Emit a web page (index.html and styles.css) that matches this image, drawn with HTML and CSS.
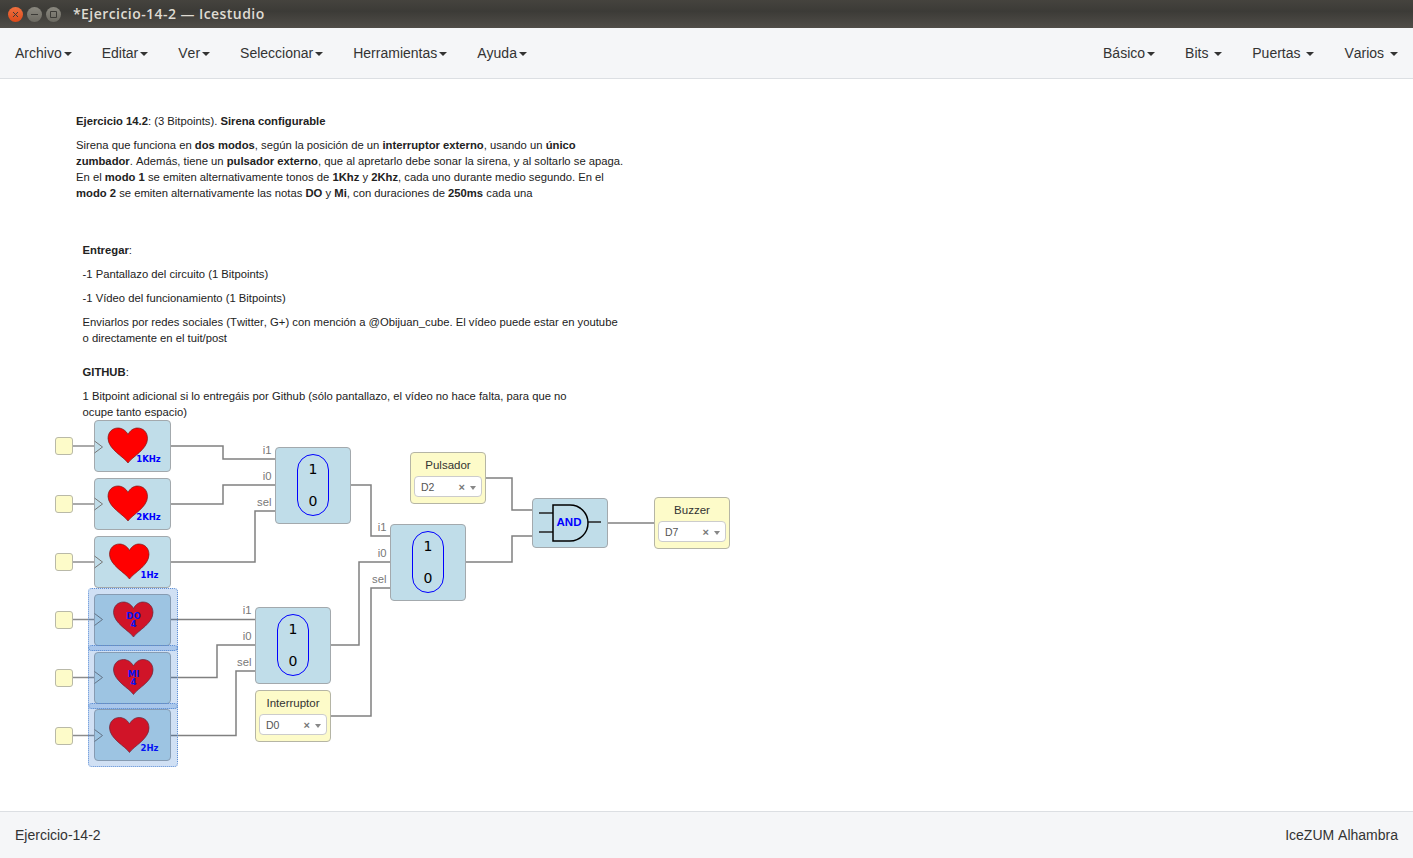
FILE: index.html
```html
<!DOCTYPE html>
<html>
  <head>
    <meta charset="utf-8" />
    <title>Icestudio</title>
    <link rel="stylesheet" href="styles.css">
  </head>

  <body>
    <!-- shared drawings for the blocks -->
    <svg class="defs">
      <defs>
        <path id="heart" d="M20.5 35.5C16 29 1 22 .5 11 .5 4.5 5 .5 10.5 .5 14.5 .5 18.5 3 20.5 7 22.5 3 26 .5 30 .5 35.5 .5 40 4.5 40 11 40 22 25 29 20.5 35.5Z" />
        <path id="clock" d="M0 0L8 6 0 12" />
      </defs>
    </svg>

    <header class="titlebar">
      <div class="win-buttons">
        <span class="win-btn win-close"><svg width="7" height="7" viewBox="0 0 7 7"><path d="M1 1L6 6M6 1L1 6" /></svg></span>
        <span class="win-btn"><svg width="7" height="7" viewBox="0 0 7 7"><path d="M0 3.5H7" /></svg></span>
        <span class="win-btn"><svg width="7" height="7" viewBox="0 0 7 7"><path d="M.5 .5H6.5V6.5H.5Z" /></svg></span>
      </div>
      <span class="win-title">*Ejercicio-14-2 — Icestudio</span>
    </header>

    <nav class="menubar">
      <ul class="menu">
        <li>Archivo<i class="caret"></i></li>
        <li>Editar<i class="caret"></i></li>
        <li>Ver<i class="caret"></i></li>
        <li>Seleccionar<i class="caret"></i></li>
        <li>Herramientas<i class="caret"></i></li>
        <li>Ayuda<i class="caret"></i></li>
      </ul>
      <ul class="menu">
        <li>Básico<i class="caret"></i></li>
        <li>Bits <i class="caret"></i></li>
        <li>Puertas <i class="caret"></i></li>
        <li>Varios <i class="caret"></i></li>
      </ul>
    </nav>

    <main class="canvas">
      <div class="info info-a">
        <p><b>Ejercicio 14.2</b>: (3 Bitpoints). <b>Sirena configurable</b></p>
        <p>Sirena que funciona en <b>dos modos</b>, según la posición de un <b>interruptor externo</b>, usando un <b>único<br>zumbador</b>. Además, tiene un <b>pulsador externo</b>, que al apretarlo debe sonar la sirena, y al soltarlo se apaga.<br>En el <b>modo 1</b> se emiten alternativamente tonos de <b>1Khz</b> y <b>2Khz</b>, cada uno durante medio segundo. En el<br><b>modo 2</b> se emiten alternativamente las notas <b>DO</b> y <b>Mi</b>, con duraciones de <b>250ms</b> cada una</p>
      </div>

      <div class="info info-b">
        <p><b>Entregar</b>:</p>
        <p>-1 Pantallazo del circuito (1 Bitpoints)</p>
        <p>-1 Vídeo del funcionamiento (1 Bitpoints)</p>
        <p>Enviarlos por redes sociales (Twitter, G+) con mención a @Obijuan_cube. El vídeo puede estar en youtube<br>o directamente en el tuit/post</p>
        <p class="gap"><b>GITHUB</b>:</p>
        <p>1 Bitpoint adicional si lo entregáis por Github (sólo pantallazo, el vídeo no hace falta, para que no<br>ocupe tanto espacio)</p>
      </div>

      <!-- wires use page coordinates, see the viewBox -->
      <svg class="wires" viewBox="0 79 1413 732">
        <g class="wire-light">
          <path d="M72 446H95" />
          <path d="M72 504H95" />
          <path d="M72 562H95" />
        </g>
        <g class="wire-mid">
          <path d="M72 619.500H95" />
          <path d="M72 677.500H95" />
          <path d="M72 735.500H95" />
        </g>
        <path d="M171 446H223V459H275" />
        <path d="M171 504H223V485H275" />
        <path d="M171 562H255V511H275" />
        <path d="M351 485H371V536H390" />
        <path d="M171 619.500H255" />
        <path d="M171 677.500H217V645H255" />
        <path d="M171 735.500H236V671H255" />
        <path d="M331 645H359V562H390" />
        <path d="M331 716H371V588H390" />
        <path d="M486 478H512V510H532" />
        <path d="M466 562H512V536H532" />
        <path d="M608 523H654" />
      </svg>

      <div class="node pin pin-1"></div>
      <div class="node pin pin-2"></div>
      <div class="node pin pin-3"></div>
      <div class="node pin pin-4"></div>
      <div class="node pin pin-5"></div>
      <div class="node pin pin-6"></div>

      <div class="node block note note-1">
        <svg class="block-art" viewBox="0 0 77 52">
          <use class="clk" href="#clock" x="0.500" y="21" />
          <use class="hrt" href="#heart" x="13.500" y="7.500" />
          <text class="tag" x="54.500" y="42" text-anchor="middle">1KHz</text>
        </svg>
      </div>
      <div class="node block note note-2">
        <svg class="block-art" viewBox="0 0 77 52">
          <use class="clk" href="#clock" x="0.500" y="20" />
          <use class="hrt" href="#heart" x="13.500" y="7.500" />
          <text class="tag" x="54.500" y="42" text-anchor="middle">2KHz</text>
        </svg>
      </div>
      <div class="node block note note-3">
        <svg class="block-art" viewBox="0 0 77 52">
          <use class="clk" href="#clock" x="0.500" y="20" />
          <use class="hrt" href="#heart" x="15" y="7.500" />
          <text class="tag" x="55.500" y="42" text-anchor="middle">1Hz</text>
        </svg>
      </div>
      <div class="node block note note-4">
        <svg class="block-art" viewBox="0 0 77 52">
          <use class="clk" href="#clock" x="0.500" y="19.500" />
          <use class="hrt" href="#heart" x="19" y="7.500" />
          <text class="tag" x="39.500" y="25" text-anchor="middle">DO</text>
          <text class="tag" x="39.500" y="33" text-anchor="middle">4</text>
        </svg>
      </div>
      <div class="node block note note-5">
        <svg class="block-art" viewBox="0 0 77 52">
          <use class="clk" href="#clock" x="0.500" y="19.500" />
          <use class="hrt" href="#heart" x="19" y="7" />
          <text class="tag" x="39.500" y="25" text-anchor="middle">MI</text>
          <text class="tag" x="39.500" y="33" text-anchor="middle">4</text>
        </svg>
      </div>
      <div class="node block note note-6">
        <svg class="block-art" viewBox="0 0 77 52">
          <use class="clk" href="#clock" x="0.500" y="20.500" />
          <use class="hrt" href="#heart" x="15" y="8" />
          <text class="tag" x="55.500" y="42" text-anchor="middle">2Hz</text>
        </svg>
      </div>

      <div class="node block mux mux-1">
        <span class="port port-i1">i1</span><span class="port port-i0">i0</span><span class="port port-sel">sel</span>
        <div class="pill"><span>1</span><span>0</span></div>
      </div>
      <div class="node block mux mux-2">
        <span class="port port-i1">i1</span><span class="port port-i0">i0</span><span class="port port-sel">sel</span>
        <div class="pill"><span>1</span><span>0</span></div>
      </div>
      <div class="node block mux mux-3">
        <span class="port port-i1">i1</span><span class="port port-i0">i0</span><span class="port port-sel">sel</span>
        <div class="pill"><span>1</span><span>0</span></div>
      </div>

      <div class="node block gate">
        <svg class="block-art" viewBox="0 0 77 50">
          <path class="gate-line" d="M7 15H21M7 34H21M56 24H69" />
          <path class="gate-body" d="M21 7H38C48 7 56 15 56 25S48 43 38 43H21Z" />
          <text class="gate-text" x="37" y="28" text-anchor="middle">AND</text>
        </svg>
      </div>

      <div class="node io io-pulsador">
        <div class="io-name">Pulsador</div>
        <div class="io-select"><span>D2</span><span class="io-x">×</span><i class="io-arrow"></i></div>
      </div>
      <div class="node io io-buzzer">
        <div class="io-name">Buzzer</div>
        <div class="io-select"><span>D7</span><span class="io-x">×</span><i class="io-arrow"></i></div>
      </div>
      <div class="node io io-interruptor">
        <div class="io-name">Interruptor</div>
        <div class="io-select"><span>D0</span><span class="io-x">×</span><i class="io-arrow"></i></div>
      </div>

      <!-- selection boxes sit over the blocks and tint them -->
      <div class="node sel sel-1"></div>
      <div class="node sel sel-2"></div>
      <div class="node sel sel-3"></div>
    </main>

    <footer class="statusbar">
      <span>Ejercicio-14-2</span>
      <span>IceZUM Alhambra</span>
    </footer>
  </body>
</html>
```

FILE: styles.css
```css
html,
body {
  height: 100%;
}

body {
  margin: 0;
  display: flex;
  flex-direction: column;
  font-family: "Liberation Sans", Arial, sans-serif;
  font-kerning: none;
  color: #333;
  background: #fff;
  overflow: hidden;
}

.defs {
  position: absolute;
  width: 0;
  height: 0;
}

/* Window title bar */
.titlebar {
  flex: 0 0 28px;
  display: flex;
  align-items: center;
  background: linear-gradient(#45433e, #3c3b37 40%, #504d48);
}

.win-buttons {
  display: flex;
  gap: 4px;
  padding-left: 8px;
  width: 65px;
}

.win-btn {
  width: 15px;
  height: 15px;
  border-radius: 50%;
  display: flex;
  align-items: center;
  justify-content: center;
  background: linear-gradient(#8a887f, #6c6a62);
  border: 0;
}

.win-btn svg {
  fill: none;
  stroke: #3c3b37;
  stroke-width: 1;
}

.win-close {
  background: linear-gradient(#f0703f, #dc4a1a);
}

.win-title {
  padding-bottom: 2px;
  font-family: "Open Sans", sans-serif;
  font-size: 14px;
  font-weight: 600;
  letter-spacing: 0.44px;
  color: #dfdbd2;
}

/* Menus */
.menubar {
  flex: 0 0 50px;
  display: flex;
  justify-content: space-between;
  background: #f5f6f8;
  border-bottom: 1px solid #dcdfe3;
}

.menu {
  display: flex;
  margin: 0;
  padding: 0;
  list-style: none;
  font-size: 14px;
}

.menu li {
  padding: 0 15px;
  line-height: 50px;
  white-space: nowrap;
}

.caret {
  display: inline-block;
  width: 0;
  height: 0;
  margin-left: 2px;
  vertical-align: middle;
  border-top: 4px solid #333;
  border-left: 4px solid transparent;
  border-right: 4px solid transparent;
}

/* Design canvas, everything in it is placed freely */
.canvas {
  flex: 1;
  position: relative;
}

.info {
  position: absolute;
  font-size: 11.25px;
  line-height: 16px;
  color: #222;
}

.info p {
  margin: 0 0 8px;
  white-space: nowrap;
}

.info .gap {
  margin-top: 18px;
}

.info-a {
  left: 76px;
  top: 34px;
}

.info-b {
  left: 82.5px;
  top: 163px;
}

.wires {
  position: absolute;
  left: 0;
  top: 0;
  width: 1413px;
  height: 732px;
  fill: none;
  stroke: #808080;
  stroke-width: 1.5;
}

.wire-light {
  stroke: #aaa;
  stroke-width: 2;
}

.wire-mid {
  stroke: #8c8c8c;
}

.node {
  position: absolute;
  box-sizing: border-box;
}

.pin {
  left: 55px;
  width: 18px;
  height: 18px;
  background: #fdfbc9;
  border: 1px solid #b9b9a8;
  border-radius: 3px;
}

.pin-1 { top: 358px; }
.pin-2 { top: 416px; }
.pin-3 { top: 474px; }
.pin-4 { top: 532px; }
.pin-5 { top: 590px; }
.pin-6 { top: 648px; }

.block {
  background: #c0dde9;
  border: 1px solid #a3a9ad;
  border-radius: 4px;
}

.block-art {
  position: absolute;
  left: -1px;
  top: -1px;
  width: 77px;
  height: 50px;
  overflow: visible;
}

.note {
  left: 94px;
  width: 77px;
  height: 52px;
}

.note .block-art {
  height: 52px;
}

.note-1 { top: 341px; }
.note-2 { top: 399px; }
.note-3 { top: 457px; }
.note-4 { top: 515px; }
.note-5 { top: 573px; }
.note-6 { top: 630px; }

.clk {
  fill: none;
  stroke: #777;
  stroke-width: 1;
}

.hrt {
  fill: #f00;
  stroke: #7a1a1a;
  stroke-width: 0.7;
}

.tag {
  font-family: "DejaVu Sans", sans-serif;
  font-size: 8.5px;
  font-weight: bold;
  fill: #00f;
}

.mux {
  width: 76px;
  height: 77px;
}

.mux-1 { left: 275px; top: 368px; }
.mux-2 { left: 390px; top: 445px; }
.mux-3 { left: 255px; top: 528px; }

.port {
  position: absolute;
  right: 78.5px;
  font-size: 11.25px;
  line-height: 12px;
  color: #777;
}

.port-i1 { top: -4px; }
.port-i0 { top: 22px; }
.port-sel { top: 48px; }

.pill {
  box-sizing: border-box;
  width: 32px;
  height: 62px;
  margin: 6px auto 0;
  display: flex;
  flex-direction: column;
  align-items: center;
  justify-content: space-between;
  padding: 6px 0 5px;
  border: 1.5px solid #00f;
  border-radius: 16px;
  font-family: "DejaVu Sans", sans-serif;
  font-size: 14px;
  line-height: 17px;
  color: #000;
}

.gate {
  left: 532px;
  top: 419px;
  width: 76px;
  height: 50px;
}

.gate-line {
  fill: none;
  stroke: #222;
  stroke-width: 1.5;
}

.gate-body {
  fill: none;
  stroke: #000;
  stroke-width: 1.5;
}

.gate-text {
  font-family: "Liberation Sans", sans-serif;
  font-size: 11.5px;
  font-weight: bold;
  fill: #00f;
}

.io {
  width: 76px;
  height: 52px;
  background: #fdfbc9;
  border: 1px solid #b5b5a5;
  border-radius: 4px;
  padding: 0 3px;
}

.io-pulsador { left: 410px; top: 373px; }
.io-buzzer { left: 654px; top: 418px; }
.io-interruptor { left: 255px; top: 611px; }

.io-name {
  font-size: 11.5px;
  line-height: 14px;
  margin: 5px 0 4px;
  text-align: center;
  color: #333;
}

.io-select {
  box-sizing: border-box;
  height: 21px;
  display: flex;
  align-items: center;
  padding: 0 5px 0 6px;
  background: #fff;
  border: 1px solid #ccc;
  border-radius: 4px;
  font-size: 10.5px;
  color: #555;
}

.io-x {
  margin-left: auto;
  color: #777;
  font-weight: bold;
  font-size: 11px;
}

.io-arrow {
  width: 0;
  height: 0;
  margin-left: 5px;
  margin-top: 2px;
  border-top: 4px solid #888;
  border-left: 3.5px solid transparent;
  border-right: 3.5px solid transparent;
}

.sel {
  left: 88px;
  width: 90px;
  height: 64px;
  background: rgba(20, 100, 200, 0.2);
  border: 1px dotted #5f8fd6;
  border-radius: 4px;
}

.sel-1 { top: 509px; height: 63px; }
.sel-2 { top: 566px; }
.sel-3 { top: 624px; }

/* Status bar */
.statusbar {
  flex: 0 0 46px;
  display: flex;
  justify-content: space-between;
  align-items: center;
  padding: 0 15px;
  font-size: 14px;
  background: #f5f6f8;
  border-top: 1px solid #dcdfe3;
}
```
